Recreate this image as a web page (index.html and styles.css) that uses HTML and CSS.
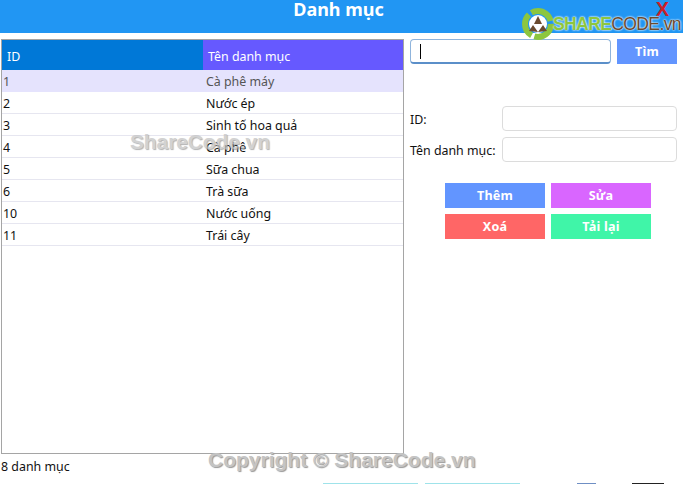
FILE: index.html
```html
<!DOCTYPE html>
<html lang="en">
<head>
<meta charset="UTF-8">
<meta name="viewport" content="width=device-width, initial-scale=1.0">
<title>Danh mục</title>
<link rel="stylesheet" href="styles.css">
</head>
<body>

<div class="titlebar">
  <h1>Danh mục</h1>
  <span class="close">X</span>
</div>

<div class="main">
  <div class="left">
    <div class="grid">
      <div class="row head">
        <div class="col-id">ID</div>
        <div class="col-name">Tên danh mục</div>
      </div>
      <div class="row selected"><div class="col-id">1</div><div class="col-name">Cà phê máy</div></div>
      <div class="row"><div class="col-id">2</div><div class="col-name">Nước ép</div></div>
      <div class="row"><div class="col-id">3</div><div class="col-name">Sinh tố hoa quả</div></div>
      <div class="row"><div class="col-id">4</div><div class="col-name">Cà phê</div></div>
      <div class="row"><div class="col-id">5</div><div class="col-name">Sữa chua</div></div>
      <div class="row"><div class="col-id">6</div><div class="col-name">Trà sữa</div></div>
      <div class="row"><div class="col-id">10</div><div class="col-name">Nước uống</div></div>
      <div class="row"><div class="col-id">11</div><div class="col-name">Trái cây</div></div>
    </div>
    <p class="count">8 danh mục</p>
  </div>

  <div class="right">
    <div class="search">
      <div class="search-box"><span class="caret"></span></div>
      <button class="btn btn-find">Tìm</button>
    </div>
    <div class="field">
      <label>ID:</label>
      <input type="text">
    </div>
    <div class="field">
      <label>Tên danh mục:</label>
      <input type="text">
    </div>
    <div class="actions">
      <button class="btn btn-add">Thêm</button>
      <button class="btn btn-edit">Sửa</button>
      <button class="btn btn-del">Xoá</button>
      <button class="btn btn-reload">Tải lại</button>
    </div>
  </div>
</div>

<!-- the next window just shows at the bottom edge -->
<div class="peek">
  <span class="peek-a"></span>
  <span class="peek-b"></span>
  <span class="peek-c"></span>
  <span class="peek-d"></span>
</div>

<!-- watermarks, they lie over the app -->
<div class="logo">
  <svg width="34" height="34" viewBox="0 0 34 34">
    <circle cx="17" cy="17" r="13" fill="none" stroke="#8cc63f" stroke-width="6" stroke-dasharray="24 3"/>
    <circle cx="17" cy="17" r="9" fill="#fff"/>
    <path d="M17 9 L21 17 L13 17 Z M12 18 L17 25 L8 24 Z M22 18 L26 24 L17 25 Z" fill="#6b4a2f"/>
  </svg>
  <span class="logo-text"><b>SHARE</b>CODE.vn</span>
</div>
<div class="mark mark-mid">ShareCode.vn</div>
<div class="mark mark-bottom">Copyright © ShareCode.vn</div>

</body>
</html>
```

FILE: styles.css
```css
body {
  margin: 0;
  height: 484px;
  overflow: hidden;
  position: relative;
  background: #fff;
  font-family: "Noto Sans", "Open Sans", sans-serif;
  font-size: 12.4px;
  color: #111;
}

.titlebar {
  height: 33px;
  background: #2196f3;
  position: relative;
  text-align: center;
}
.titlebar h1 {
  margin: 0;
  font-size: 18px;
  line-height: 19px;
  font-weight: bold;
  color: #fff;
  padding-right: 6px;
}
.close {
  position: absolute;
  top: -1px;
  right: 14px;
  font-family: "Liberation Sans", sans-serif;
  font-size: 20px;
  line-height: 20px;
  font-weight: bold;
  color: #c8202a;
}

.main {
  display: flex;
  gap: 6px;
  padding: 6px 6px 0 1px;
}
.left {
  width: 403px;
}
.right {
  flex: 1;
}

.grid {
  height: 413px;
  border: 1px solid #a5a5a5;
}
.row {
  display: flex;
  height: 22px;
  line-height: 23px;
  border-bottom: 1px solid #e6e6f0;
  box-sizing: border-box;
}
.col-id {
  width: 201px;
  padding-left: 1px;
  box-sizing: border-box;
}
.col-name {
  flex: 1;
  padding-left: 3px;
}
.row.head {
  height: 30px;
  line-height: 33px;
  border-bottom: none;
  color: #fff;
}
.head .col-id {
  background: #0078d7;
  padding-left: 5px;
}
.head .col-name {
  background: #6659ff;
  padding-left: 5px;
}
.row.selected {
  background: #e5e3fd;
  border-bottom: none;
  color: #555;
}
.count {
  margin: 4px 0 0 0;
  line-height: 17px;
}

.search {
  display: flex;
  gap: 6px;
  margin-bottom: 42px;
}
.search-box {
  width: 201px;
  height: 25px;
  box-sizing: border-box;
  border: 1px solid #8fb4dc;
  border-bottom: 2px solid #5b8fc9;
  border-radius: 4px;
  padding: 4px 9px;
}
.caret {
  display: block;
  width: 1px;
  height: 15px;
  background: #000;
}

.field {
  display: flex;
  align-items: center;
  margin-bottom: 6px;
}
.field label {
  width: 92px;
  padding-top: 2px;
}
.field input {
  width: 175px;
  height: 25px;
  box-sizing: border-box;
  border: 1px solid #dcdcdc;
  border-radius: 4px;
  padding: 0;
  outline: none;
}

.btn {
  width: 100px;
  height: 25px;
  border: none;
  padding: 0;
  font-family: inherit;
  font-size: 12.6px;
  font-weight: bold;
  letter-spacing: 0.2px;
  color: #fff;
}
.btn-find {
  width: 60px;
  background: #6295ff;
}
.btn-add {
  background: #6295ff;
}
.btn-edit {
  background: #d966ff;
}
.btn-del {
  background: #ff6666;
}
.btn-reload {
  background: #40f5a8;
}
.actions {
  display: grid;
  grid-template-columns: 100px 100px;
  gap: 6px;
  margin: 21px 0 0 35px;
}

.peek {
  display: flex;
  height: 1px;
  margin-top: 8px;
  padding-left: 323px;
}
.peek span {
  display: block;
  height: 1px;
}
.peek-a {
  width: 95px;
  background: #9fe3ea;
}
.peek-b {
  width: 95px;
  margin-left: 7px;
  background: #9fe3ea;
}
.peek-c {
  width: 19px;
  margin-left: 57px;
  background: #6f8fc4;
}
.peek-d {
  width: 32px;
  margin-left: 36px;
  background: #222;
}

.logo {
  position: absolute;
  top: 7px;
  left: 521px;
  display: flex;
  align-items: center;
}
.logo-text {
  font-family: "Liberation Sans", sans-serif;
  font-size: 17.5px;
  letter-spacing: -0.6px;
  margin-left: -2px;
  color: #6b4a2f;
  text-shadow: 0 0 2px #fff, 0 0 2px #fff;
}
.logo-text b {
  color: #8cc63f;
}

.mark {
  position: absolute;
  font-family: "Liberation Sans", sans-serif;
  font-weight: bold;
  color: #c4c4c4;
  text-shadow: 1px 1px 1px #999;
  white-space: nowrap;
}
.mark-mid {
  top: 130px;
  left: 130px;
  font-size: 20.8px;
  opacity: 0.75;
}
.mark-bottom {
  top: 448px;
  left: 208px;
  font-size: 21px;
}
```
